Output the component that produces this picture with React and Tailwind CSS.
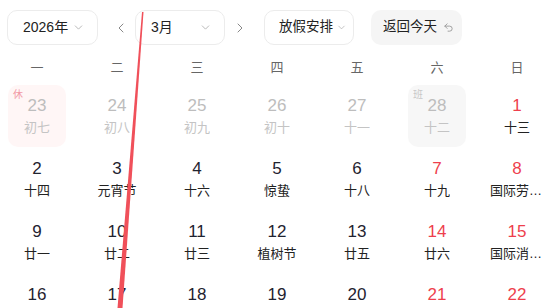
import { ChevronDown, ChevronLeft, ChevronRight, Undo2 } from "lucide-react";

const weekdays = ["一", "二", "三", "四", "五", "六", "日"];

const rows = [
    [
        { d: 23, l: "初七", prev: true, tag: "休" },
        { d: 24, l: "初八", prev: true },
        { d: 25, l: "初九", prev: true },
        { d: 26, l: "初十", prev: true },
        { d: 27, l: "十一", prev: true },
        { d: 28, l: "十二", prev: true, tag: "班" },
        { d: 1, l: "十三", red: true },
    ],
    [
        { d: 2, l: "十四" },
        { d: 3, l: "元宵节" },
        { d: 4, l: "十六" },
        { d: 5, l: "惊蛰" },
        { d: 6, l: "十八" },
        { d: 7, l: "十九", red: true },
        { d: 8, l: "国际劳动妇女节", red: true },
    ],
    [
        { d: 9, l: "廿一" },
        { d: 10, l: "廿二" },
        { d: 11, l: "廿三" },
        { d: 12, l: "植树节" },
        { d: 13, l: "廿五" },
        { d: 14, l: "廿六", red: true },
        { d: 15, l: "国际消费者权益日", red: true },
    ],
    [
        { d: 16, l: "廿八" },
        { d: 17, l: "廿九" },
        { d: 18, l: "三十" },
        { d: 19, l: "二月" },
        { d: 20, l: "初二" },
        { d: 21, l: "初三", red: true },
        { d: 22, l: "初四", red: true },
    ],
];

function Select({ label, width }) {
    return (
        <div className={`flex items-center justify-between h-[35px] ${width} rounded-[10px] border border-[#ececec] pl-[15px] pr-[12px] text-[14px] text-[#222]`}>
            <span>{label}</span>
            <ChevronDown className="w-[13px] h-[13px] text-[#aaa]" strokeWidth={1.5} />
        </div>
    );
}

function Cell({ c }) {
    let numColor = "text-[#1f2330]";
    if (c.prev) numColor = "text-[#bdbdbd]";
    else if (c.red) numColor = "text-[#ee3f4d]";
    const lunarColor = c.prev ? "text-[#c4c4c4]" : "text-[#222]";
    let bg = "";
    if (c.tag === "休") bg = "bg-[#fff6f6]";
    if (c.tag === "班") bg = "bg-[#f7f7f7]";
    return (
        <div className="flex justify-center h-[63px]">
            <div className={`relative flex flex-col items-center w-[58px] h-[62px] rounded-[10px] pt-[11px] ${bg}`}>
                {c.tag && (
                    <span className={`absolute top-[4px] left-[5px] text-[10px] leading-[12px] ${c.tag === "休" ? "text-[#f29aa6]" : "text-[#c8c8c8]"}`}>
                        {c.tag}
                    </span>
                )}
                <span className={`text-[17px] leading-[20px] ${numColor}`}>{c.d}</span>
                <span className={`mt-[3px] text-[13px] leading-[18px] max-w-[54px] truncate ${lunarColor}`}>{c.l}</span>
            </div>
        </div>
    );
}

export default function App() {
    return (
        <div className="relative w-[549px] h-[308px] overflow-hidden bg-white font-['Liberation_Sans','Noto_Sans_CJK_SC',sans-serif]">
            <div className="flex items-center pt-[10px] pl-[7px]">
                <Select label="2026年" width="w-[91px]" />
                <ChevronLeft className="ml-[15px] w-[16px] h-[16px] text-[#888]" strokeWidth={1.5} />
                <div className="ml-[6px]">
                    <Select label="3月" width="w-[90px]" />
                </div>
                <ChevronRight className="ml-[7px] w-[16px] h-[16px] text-[#888]" strokeWidth={1.5} />
                <div className="ml-[16px]">
                    <div className="flex items-center h-[35px] w-[90px] rounded-[10px] border border-[#ececec] pl-[14px] text-[13.5px] text-[#222]">
                        <span>放假安排</span>
                        <ChevronDown className="ml-[3px] w-[11px] h-[11px] text-[#aaa]" strokeWidth={1.5} />
                    </div>
                </div>
                <div className="ml-[17px] flex items-center h-[35px] w-[91px] rounded-[10px] bg-[#f5f5f5] pl-[12px] text-[13.5px] text-[#222]">
                    <span>返回今天</span>
                    <Undo2 className="ml-[6px] w-[11px] h-[11px] text-[#999]" strokeWidth={2} />
                </div>
            </div>

            <div className="ml-[-3px] w-[560px] grid grid-cols-[repeat(7,80px)]">
                {weekdays.map(w => (
                    <div key={w} className="h-[40px] pt-[15px] text-center text-[13px] leading-[16px] text-[#666]">{w}</div>
                ))}
                {rows.map((r, i) => r.map((c, j) => <Cell key={i + "-" + j} c={c} />))}
            </div>

            <svg className="absolute inset-0 pointer-events-none" width="549" height="308" viewBox="0 0 549 308">
                <polygon points="142,12 143.5,12 122.5,308 117.5,308" fill="#f0505a" />
            </svg>
        </div>
    );
}
